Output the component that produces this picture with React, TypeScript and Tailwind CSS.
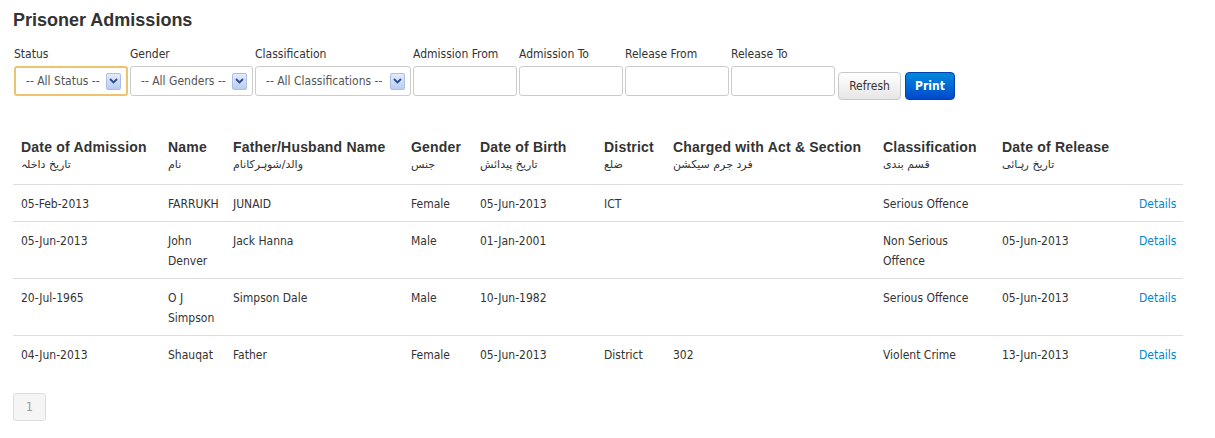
import React from "react";

type Row = {
  admitted: string;
  name: string;
  father: string;
  gender: string;
  dob: string;
  district: string;
  charged: string;
  classification: string;
  released: string;
};

const ROWS: Row[] = [
  {
    admitted: "05-Feb-2013",
    name: "FARRUKH",
    father: "JUNAID",
    gender: "Female",
    dob: "05-Jun-2013",
    district: "ICT",
    charged: "",
    classification: "Serious Offence",
    released: "",
  },
  {
    admitted: "05-Jun-2013",
    name: "John Denver",
    father: "Jack Hanna",
    gender: "Male",
    dob: "01-Jan-2001",
    district: "",
    charged: "",
    classification: "Non Serious Offence",
    released: "05-Jun-2013",
  },
  {
    admitted: "20-Jul-1965",
    name: "O J Simpson",
    father: "Simpson Dale",
    gender: "Male",
    dob: "10-Jun-1982",
    district: "",
    charged: "",
    classification: "Serious Offence",
    released: "05-Jun-2013",
  },
  {
    admitted: "04-Jun-2013",
    name: "Shauqat",
    father: "Father",
    gender: "Female",
    dob: "05-Jun-2013",
    district: "District",
    charged: "302",
    classification: "Violent Crime",
    released: "13-Jun-2013",
  },
];

const HEADERS: { en: string; ur: string; width: string }[] = [
  { en: "Date of Admission", ur: "تاریخ داخلہ", width: "w-[147px]" },
  { en: "Name", ur: "نام", width: "w-[65px]" },
  { en: "Father/Husband Name", ur: "والد/شوہرکانام", width: "w-[178px]" },
  { en: "Gender", ur: "جنس", width: "w-[69px]" },
  { en: "Date of Birth", ur: "تاریخ پیدائش", width: "w-[124px]" },
  { en: "District", ur: "ضلع", width: "w-[69px]" },
  { en: "Charged with Act & Section", ur: "فرد جرم سیکشن", width: "w-[210px]" },
  { en: "Classification", ur: "قسم بندی", width: "w-[119px]" },
  { en: "Date of Release", ur: "تاریخ رہائی", width: "w-[137px]" },
];

const NARROW =
  "font-['Liberation_Sans_Narrow','DejaVu_Sans_Condensed','Liberation_Sans',sans-serif]";

function FakeSelect({
  label,
  text,
  width,
  focused,
}: {
  label: string;
  text: string;
  width: string;
  focused?: boolean;
}) {
  return (
    <div className={width}>
      <div className="h-[20px] leading-[20px] text-[12px] text-[#333]">{label}</div>
      <div
        className={
          "mt-[2px] h-[30px] flex items-center justify-between rounded-[3px] bg-white pl-[10px] pr-[5px] " +
          (focused ? "border-2 border-[#efc36e] pl-[9px] pr-[4px]" : "border border-[#ccc]")
        }
      >
        <span className="text-[12px] text-[#555] whitespace-nowrap">{text}</span>
        <span className="flex h-[17px] w-[15px] items-center justify-center rounded-[2px] border border-[#a9bfe8] bg-gradient-to-b from-[#e3ebfb] to-[#b9cdf1]">
          <svg width="9" height="6" viewBox="0 0 9 6">
            <path d="M1 1l3.5 3.5L8 1" fill="none" stroke="#2f4d8a" strokeWidth="1.8" />
          </svg>
        </span>
      </div>
    </div>
  );
}

function DateInput({ label }: { label: string }) {
  return (
    <div className="w-[104px]">
      <div className="h-[20px] leading-[20px] text-[12px] text-[#333] whitespace-nowrap">{label}</div>
      <div className="mt-[2px] h-[30px] rounded-[3px] border border-[#ccc] bg-white" />
    </div>
  );
}

export default function App() {
  return (
    <div className={"min-h-[438px] bg-white pl-[13px] pt-[10px] text-[#333] " + NARROW}>
      <h1 className="font-['Liberation_Sans',sans-serif] text-[18px] font-bold leading-[20px] text-[#333]">
        Prisoner Admissions
      </h1>

      <div className="mt-[14px] flex items-start gap-[2px] pl-[1px]">
        <FakeSelect label="Status" text="-- All Status --" width="w-[114px]" focused />
        <FakeSelect label="Gender" text="-- All Genders --" width="w-[123px]" />
        <FakeSelect label="Classification" text="-- All Classifications --" width="w-[156px]" />
        <DateInput label="Admission From" />
        <DateInput label="Admission To" />
        <DateInput label="Release From" />
        <DateInput label="Release To" />
        <div className="ml-[1px] mt-[28px] flex gap-[4px]">
          <button className="h-[28px] w-[63px] rounded-[4px] border border-[#c8c8c8] bg-gradient-to-b from-white to-[#e6e6e6] text-[12px] text-[#333]">
            Refresh
          </button>
          <button className="h-[28px] w-[50px] rounded-[4px] border border-[#0044aa] bg-gradient-to-b from-[#0088dd] to-[#0047cc] text-[12px] font-bold text-white">
            Print
          </button>
        </div>
      </div>

      <table className="mt-[29px] w-[1170px] table-fixed border-collapse text-left">
        <colgroup>
          {HEADERS.map((h) => (
            <col key={h.en} className={h.width} />
          ))}
          <col className="w-[52px]" />
        </colgroup>
        <thead>
          <tr>
            {HEADERS.map((h) => (
              <th key={h.en} className="px-[8px] pt-[9px] pb-[10px] align-bottom">
                <div className="font-['Liberation_Sans',sans-serif] text-[14px] font-bold leading-[18px] tracking-[0.2px] text-[#333] whitespace-nowrap">
                  {h.en}
                </div>
                <div className="h-[18px] font-['DejaVu_Sans','Noto_Sans',sans-serif] text-[11px] font-normal leading-[18px] text-[#333] whitespace-nowrap">
                  {h.ur}
                </div>
              </th>
            ))}
            <th />
          </tr>
        </thead>
        <tbody>
          {ROWS.map((r) => (
            <tr key={r.admitted + r.name} className="align-top text-[12px] leading-[20px] text-[#333]">
              <td className="border-t border-[#ddd] px-[8px] pt-[9px] pb-[7px]">{r.admitted}</td>
              <td className="border-t border-[#ddd] px-[8px] pt-[9px] pb-[7px]">{r.name}</td>
              <td className="border-t border-[#ddd] px-[8px] pt-[9px] pb-[7px]">{r.father}</td>
              <td className="border-t border-[#ddd] px-[8px] pt-[9px] pb-[7px]">{r.gender}</td>
              <td className="border-t border-[#ddd] px-[8px] pt-[9px] pb-[7px]">{r.dob}</td>
              <td className="border-t border-[#ddd] px-[8px] pt-[9px] pb-[7px]">{r.district}</td>
              <td className="border-t border-[#ddd] px-[8px] pt-[9px] pb-[7px]">{r.charged}</td>
              <td className="border-t border-[#ddd] px-[8px] pt-[9px] pb-[7px]">{r.classification}</td>
              <td className="border-t border-[#ddd] px-[8px] pt-[9px] pb-[7px]">{r.released}</td>
              <td className="border-t border-[#ddd] px-[8px] pt-[9px] pb-[7px]">
                <a href="#" className="text-[#0088cc]">
                  Details
                </a>
              </td>
            </tr>
          ))}
        </tbody>
      </table>

      <div className="mt-[21px] flex">
        <span className="flex h-[28px] w-[33px] items-center justify-center rounded-[3px] border border-[#ddd] bg-[#f5f5f5] text-[12px] text-[#999]">
          1
        </span>
      </div>
    </div>
  );
}
